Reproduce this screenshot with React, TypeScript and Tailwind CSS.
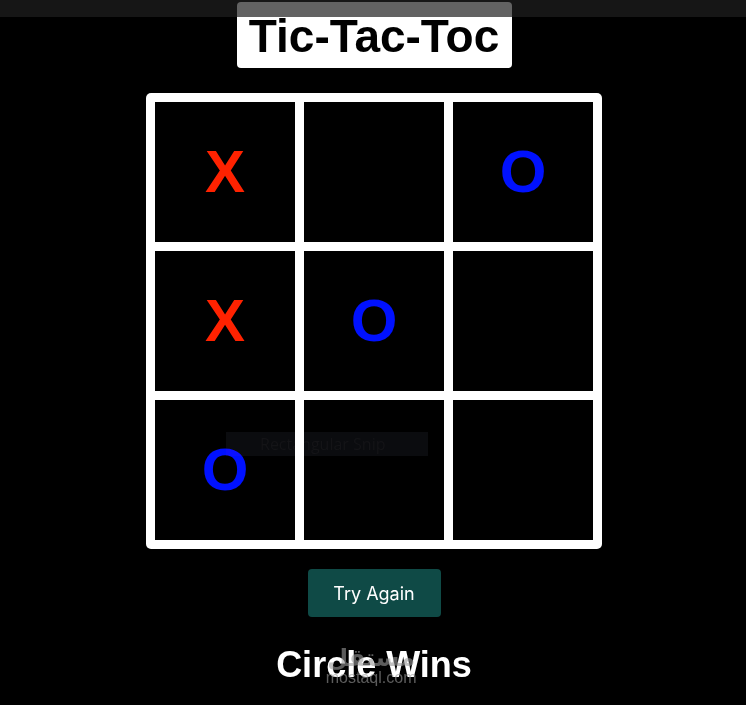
import React from "react";

type Mark = "X" | "O" | "";

const board: Mark[] = ["X", "", "O", "X", "O", "", "O", "", ""];

function Cell({ v }: { v: Mark }) {
  return (
    <div className="w-[140px] h-[140px] bg-black flex items-center justify-center">
      {v && (
        <span
          className={`text-[60px] font-bold leading-none ${v === "X" ? "text-[#ff2200]" : "text-[#0011ff]"}`}
          style={{ fontFamily: '"Liberation Sans", Arial, sans-serif' }}
        >
          {v}
        </span>
      )}
    </div>
  );
}

export default function App() {
  return (
    <div
      className="relative w-full min-h-[705px] bg-black flex flex-col items-center overflow-hidden"
      style={{ fontFamily: '"Liberation Sans", Arial, sans-serif' }}
    >
      <div className="mt-[2px] ml-[2px] h-[66px] w-[275px] bg-white rounded-[4px] flex items-center justify-center">
        <span className="text-[46px] font-bold text-black leading-none mt-[2px]">Tic-Tac-Toc</span>
      </div>

      <div className="relative mt-[25px] ml-[2px] bg-white rounded-[5px] p-[9px] grid grid-cols-[140px_140px_140px] gap-[9px]">
        {board.map((v, i) => (
          <Cell key={i} v={v} />
        ))}
        <div className="absolute left-[80px] top-[339px] w-[202px] h-[24px] bg-[#0b0c0f] mix-blend-lighten flex items-center pl-[34px]">
          <span className="text-[16px] text-[#141417] leading-none" style={{ fontFamily: '"Open Sans", "Noto Sans", sans-serif' }}>
            Rectangular Snip
          </span>
        </div>
      </div>

      <button
        className="mt-[20px] ml-[2px] w-[133px] h-[48px] bg-[#0f4a46] rounded-[4px] text-white text-[18px] flex items-center justify-center"
        style={{ fontFamily: 'Inter, "Noto Sans", sans-serif' }}
      >
        Try Again
      </button>

      <div className="relative mt-[28px] ml-[2px]">
        <span className="text-[36px] font-bold text-white leading-[40px]">Circle Wins</span>
        <div className="absolute left-[40px] top-[0px] w-[110px] flex flex-col items-center text-[#9a9a9a] opacity-60 pointer-events-none">
          <span className="text-[24px] font-bold leading-[24px]" style={{ fontFamily: '"Noto Sans", "DejaVu Sans", sans-serif' }}>مستقل</span>
          <span className="text-[16px] leading-[17px]">mostaql.com</span>
        </div>
      </div>

      <div className="absolute top-0 left-0 w-full h-[17px] bg-[#1f1f1f]/70" />
    </div>
  );
}
